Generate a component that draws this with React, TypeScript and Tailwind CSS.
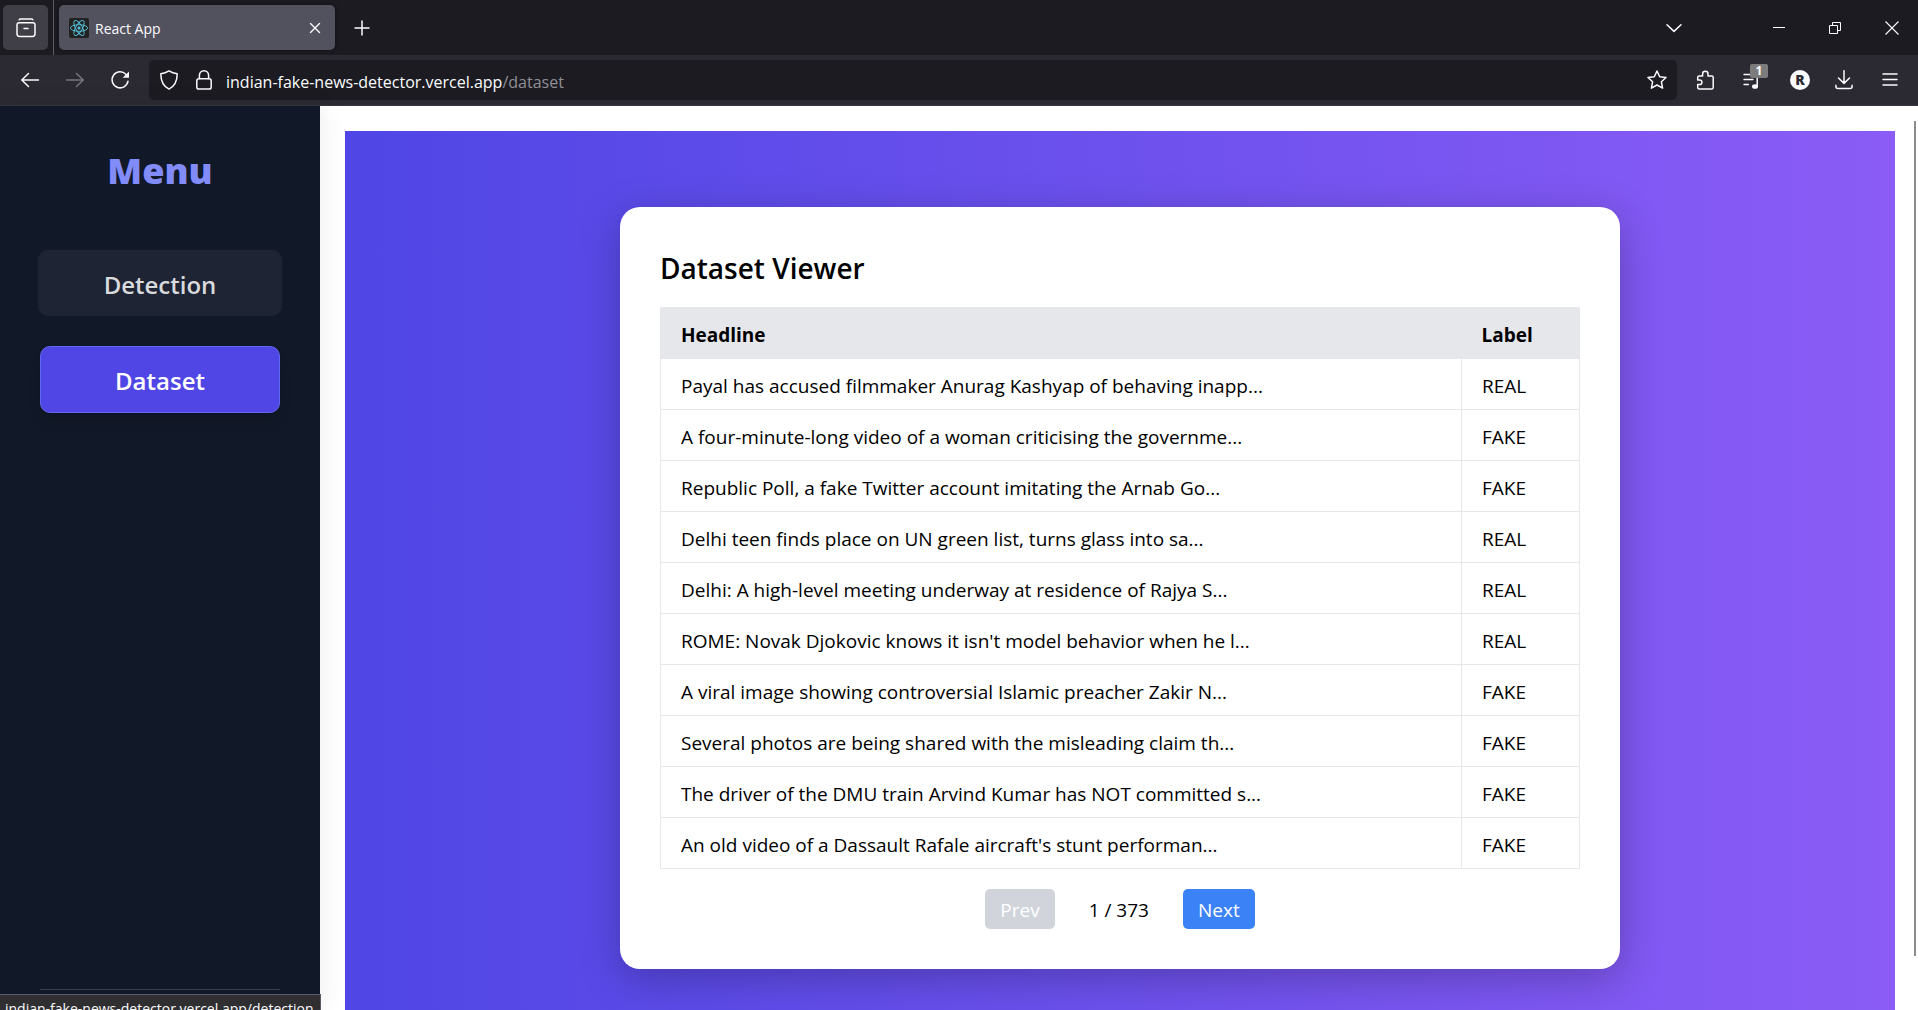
import React from "react";

const rows: [string, string][] = [
  ["Payal has accused filmmaker Anurag Kashyap of behaving inapp...", "REAL"],
  ["A four-minute-long video of a woman criticising the governme...", "FAKE"],
  ["Republic Poll, a fake Twitter account imitating the Arnab Go...", "FAKE"],
  ["Delhi teen finds place on UN green list, turns glass into sa...", "REAL"],
  ["Delhi: A high-level meeting underway at residence of Rajya S...", "REAL"],
  ["ROME: Novak Djokovic knows it isn't model behavior when he l...", "REAL"],
  ["A viral image showing controversial Islamic preacher Zakir N...", "FAKE"],
  ["Several photos are being shared with the misleading claim th...", "FAKE"],
  ["The driver of the DMU train Arvind Kumar has NOT committed s...", "FAKE"],
  ["An old video of a Dassault Rafale aircraft's stunt performan...", "FAKE"],
];

type IconProps = { children: React.ReactNode; className?: string };

function Icon({ children, className = "" }: IconProps) {
  return (
    <svg
      viewBox="0 0 20 20"
      aria-hidden="true"
      className={`size-5 shrink-0 ${className}`}
      fill="none"
      stroke="currentColor"
      strokeWidth="1.5"
      strokeLinecap="round"
      strokeLinejoin="round"
    >
      {children}
    </svg>
  );
}

function ReactLogo() {
  return (
    <svg viewBox="0 0 20 20" aria-hidden="true" className="size-5 shrink-0">
      <rect width="20" height="20" rx="2" fill="#222" />
      <g fill="none" stroke="#58c4dc" strokeWidth="0.9">
        <ellipse cx="10" cy="10" rx="8.6" ry="3.3" />
        <ellipse cx="10" cy="10" rx="8.6" ry="3.3" transform="rotate(60 10 10)" />
        <ellipse cx="10" cy="10" rx="8.6" ry="3.3" transform="rotate(120 10 10)" />
      </g>
      <circle cx="10" cy="10" r="1.6" fill="#58c4dc" />
    </svg>
  );
}

function TabStrip() {
  return (
    <div className="flex h-[55px] shrink-0 items-center bg-[#1c1b22] text-[#fbfbfe]">
      <button aria-label="Firefox View" className="ml-[3px] flex h-[45px] w-[45px] items-center justify-center rounded-[5px] bg-[#403f47]">
        <Icon>
          <path d="M3.2 1.8Q3.6.9 4.6.9h10.8q1 0 1.4.9" />
          <path d="M3.2 4.7h13.6a2.2 2.2 0 0 1 2.2 2.2v8.9a2.6 2.6 0 0 1-2.6 2.6H3.6A2.6 2.6 0 0 1 1 15.8V6.9a2.2 2.2 0 0 1 2.2-2.2z" />
          <path d="M8 10.500h4" />
        </Icon>
      </button>
      <div className="ml-[5px] h-full w-px bg-[#5b5b66]" />
      <div className="ml-[5px] flex h-[45px] w-[276px] items-center rounded-[5px] bg-[#52525e] pr-[14px] pl-[10px] shadow-[0_0_4px_rgba(0,0,0,0.5)]">
        <ReactLogo />
        <span className="ml-[6px] flex-1 pt-[2px] text-[14px]">React App</span>
        <button aria-label="Close tab">
          <svg viewBox="0 0 12 12" className="size-3" fill="none" stroke="currentColor" strokeWidth="1.4" strokeLinecap="round">
            <path d="M1.5 1.5l9 9M10.5 1.5l-9 9" />
          </svg>
        </button>
      </div>
      <button aria-label="New tab" className="ml-[18px]">
        <svg viewBox="0 0 18 18" className="size-[18px]" fill="none" stroke="currentColor" strokeWidth="1.5" strokeLinecap="round">
          <path d="M9 2v14M2 9h14" />
        </svg>
      </button>
      <div className="ml-auto flex items-center">
        <button aria-label="List all tabs" className="mr-[88px]">
          <Icon>
            <path d="M3 6.8l7 6.6 7-6.6" />
          </Icon>
        </button>
        <button aria-label="Minimize" className="mr-[42px]">
          <svg viewBox="0 0 14 14" className="size-[14px]" fill="none" stroke="currentColor">
            <path d="M1 6.5h12" />
          </svg>
        </button>
        <button aria-label="Restore" className="mr-[43px]">
          <svg viewBox="0 0 14 14" className="size-[14px]" fill="none" stroke="currentColor">
            <path d="M1.5 4.5h8v8h-8zM4.500 4.500v-3h8v8h-3" />
          </svg>
        </button>
        <button aria-label="Close window" className="mr-[19px]">
          <svg viewBox="0 0 14 14" className="size-[14px]" fill="none" stroke="currentColor" strokeWidth="1.1">
            <path d="M.5.5l13 13M13.500.5l-13 13" />
          </svg>
        </button>
      </div>
    </div>
  );
}

function Toolbar() {
  return (
    <div className="flex h-[51px] shrink-0 items-center border-b border-[#38373f] bg-[#2b2a33] text-[#fbfbfe]">
      <div className="flex items-center gap-[25px] pl-5">
        <button aria-label="Back">
          <Icon>
            <path d="M18.500 10H1.800M8.500 3.500L1.800 10l6.700 6.500" />
          </Icon>
        </button>
        <button aria-label="Forward" disabled className="text-[#77767e]">
          <Icon>
            <path d="M1.500 10h16.700M11.500 3.500l6.700 6.500-6.700 6.500" />
          </Icon>
        </button>
        <button aria-label="Reload">
          <Icon>
            <path d="M18 11.200A8 8 0 1 1 15.800 4.200" />
            <path d="M19 1.500v6.300h-6.300z" fill="currentColor" stroke="none" />
          </Icon>
        </button>
      </div>
      <div className="ml-[19px] flex h-10 flex-1 items-center rounded-[5px] bg-[#1c1b22] px-[10px]">
        <Icon>
          <path d="M10 .9c2.600 1.700 5.200 2.500 8.200 2.800 0 6.300-2 12.200-8.200 15.400C3.800 15.900 1.800 10 1.800 3.700 4.800 3.400 7.400 2.600 10 .9z" />
        </Icon>
        <Icon className="ml-[15px]">
          <path d="M5.400 8.600V5.400a4.600 4.600 0 0 1 9.200 0v3.200" />
          <rect x="2.800" y="8.800" width="14.400" height="10.300" rx="2.200" />
        </Icon>
        <div className="relative ml-3 flex-1 pt-[3px] text-[16px] leading-6">
          <input aria-label="Address" defaultValue="indian-fake-news-detector.vercel.app/dataset" className="w-full bg-transparent text-transparent caret-white outline-none" />
          <span aria-hidden="true" className="pointer-events-none absolute inset-0 pt-[3px] whitespace-nowrap">
            indian-fake-news-detector.vercel.app<span className="text-[#8f8f96]">/dataset</span>
          </span>
        </div>
        <button aria-label="Bookmark this page">
          <Icon>
            <path d="M10 1l2.700 5.700 6.300.8-4.600 4.300 1.200 6.300L10 15l-5.600 3.100 1.200-6.300L1 7.500l6.300-.8z" />
          </Icon>
        </button>
      </div>
      <div className="flex items-center gap-[26px] pr-[18px] pl-[19px]">
        <button aria-label="Extensions">
          <Icon>
            <path d="M3.200 18.900a1.500 1.500 0 0 1-1.500-1.500v-2.800h1.900a2.300 2.300 0 0 0 0-4.700H1.700V7.600a1.500 1.500 0 0 1 1.500-1.500h3.400V4a2.700 2.700 0 0 1 5.400 0v2.100h3.700a1.500 1.500 0 0 1 1.500 1.500v9.800a1.500 1.500 0 0 1-1.500 1.500z" />
          </Icon>
        </button>
        <button aria-label="Media playlist, 1 item" className="relative">
          <Icon>
            <path d="M2 4.500h9M2 9.500h9M2 14.500h4.500" strokeWidth="1.300" />
            <path d="M15.200 7v9.500" />
            <ellipse cx="13" cy="16.500" rx="3" ry="2.300" fill="currentColor" stroke="none" />
          </Icon>
          <span className="absolute -top-[6px] left-2 flex h-[14px] w-[18px] items-center justify-center rounded-[2px] bg-[#7c7c7d] text-[12px] leading-none font-bold text-white">1</span>
        </button>
        <button aria-label="Account" className="ml-[2px] -mr-[2px] flex size-5 items-center justify-center rounded-full bg-[#fbfbfe] text-[14px] leading-none font-extrabold text-[#2b2a33]">R</button>
        <button aria-label="Downloads">
          <Icon>
            <path d="M10 .8v12.400M4.500 8L10 13.400 15.500 8M1.900 15.200v1.300a2 2 0 0 0 2 2h12.200a2 2 0 0 0 2-2v-1.300" />
          </Icon>
        </button>
        <button aria-label="Open menu">
          <Icon>
            <path d="M3 4h14M3 9.500h14M3 15h14" />
          </Icon>
        </button>
      </div>
    </div>
  );
}

function Sidebar() {
  return (
    <aside className="z-10 flex w-80 shrink-0 flex-col bg-[#111827] px-10 pt-10 pb-5 shadow-[0_0_24px_rgba(0,0,0,0.08)]">
      <h1 className="text-center text-[36px] leading-[50px] font-extrabold text-[#818cf8]">Menu</h1>
      <nav className="mt-[54px] flex flex-1 flex-col gap-[30px] text-center text-[24px] leading-9 font-semibold">
        <a href="#detection" className="-mx-[2px] rounded-[10px] bg-[#1e2433] pt-[17px] pb-[13px] text-[#d8dade]">Detection</a>
        <a href="#dataset" aria-current="page" className="rounded-[10px] border border-[#6366f1] bg-[#4f46e5] pt-[16px] pb-[13px] text-white shadow-lg">Dataset</a>
      </nav>
      <hr className="border-[#374151]" />
    </aside>
  );
}

function DatasetViewer() {
  return (
    <section className="w-full max-w-[1000px] self-start rounded-[20px] bg-white p-10 text-black shadow-[0_10px_40px_rgba(0,0,0,0.25)]">
      <h2 className="mb-[19px] pt-px text-[28px] leading-10 font-semibold">Dataset Viewer</h2>
      <table className="w-full border-collapse border border-[#e5e7eb] text-left text-[19px] leading-[30px]">
        <thead className="bg-[#e5e7eb]">
          <tr>
            <th className="px-5 pt-3 pb-2 font-bold">Headline</th>
            <th className="w-[118px] px-5 pt-3 pb-2 font-bold">Label</th>
          </tr>
        </thead>
        <tbody>
          {rows.map(([headline, label]) => (
            <tr key={headline}>
              <td className="border border-[#e5e7eb] px-5 pt-3 pb-2">{headline}</td>
              <td className="border border-[#e5e7eb] px-5 pt-3 pb-2">{label}</td>
            </tr>
          ))}
        </tbody>
      </table>
      <div className="mt-5 flex items-center justify-center text-[19px] leading-[30px]">
        <button disabled className="rounded-[5px] bg-[#d1d5db] px-[15px] pt-[6px] pb-1 text-white">Prev</button>
        <span className="mx-[34px] pt-[2px]">1 / 373</span>
        <button className="rounded-[5px] bg-[#3b82f6] px-[15px] pt-[6px] pb-1 text-white">Next</button>
      </div>
    </section>
  );
}

export default function App() {
  return (
    <div className="relative flex h-screen flex-col overflow-hidden bg-white font-['Open_Sans','Noto_Sans',sans-serif]">
      <TabStrip />
      <Toolbar />
      <div className="flex min-h-0 flex-1">
        <Sidebar />
        <main className="flex min-w-0 flex-1 overflow-hidden pt-[25px] pr-[19px] pl-[25px]">
          <div className="flex min-h-full flex-1 justify-center bg-[linear-gradient(90deg,#4f46e5,#8b5cf6)] px-10 pt-[76px]">
            <DatasetViewer />
          </div>
        </main>
        <div className="w-1 shrink-0 pt-[15px] pb-[54px]">
          <div className="h-full w-[2px] bg-[#8c8c8c]" />
        </div>
      </div>
      <div className="absolute bottom-0 left-0 z-20 h-4 overflow-hidden border-t border-r border-[#5b5b66] bg-[#2f2f31] pr-[6px] pl-[5px] text-[14px] leading-[27px] text-[#fbfbfe]">
        indian-fake-news-detector.vercel.app/detection
      </div>
    </div>
  );
}
